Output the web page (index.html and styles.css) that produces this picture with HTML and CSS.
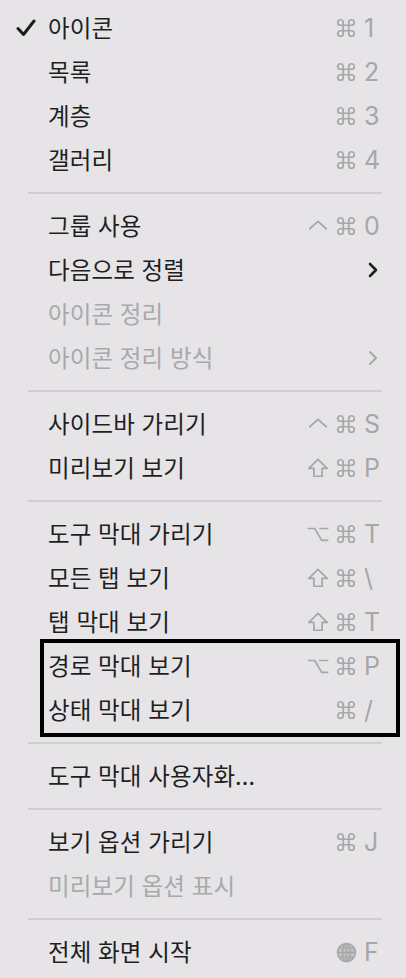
FILE: index.html
```html
<!DOCTYPE html>
<html lang="ko">
<head>
<meta charset="utf-8">
<link rel="stylesheet" href="styles.css">
<title>보기 메뉴</title>
</head>
<body>
<svg width="0" height="0" class="defs">
  <defs>
    <symbol id="cmd" viewBox="0 0 24 24"><path d="M15 6v12a3 3 0 1 0 3-3H6a3 3 0 1 0 3 3V6a3 3 0 1 0-3 3h12a3 3 0 1 0-3-3"/></symbol>
    <symbol id="ctrl" viewBox="0 0 24 24"><path d="M3 15l9-8 9 8"/></symbol>
    <symbol id="shift" viewBox="0 0 24 24"><path d="M12 2.5L2 12.5h5.5v8.5h9v-8.5H22z"/></symbol>
    <symbol id="opt" viewBox="0 0 24 24"><path d="M1.5 6h7l7.5 13h6.5M14 6h8.5"/></symbol>
    <symbol id="chev" viewBox="0 0 12 16"><path d="M3 2l6 6-6 6"/></symbol>
  </defs>
</svg>
<div class="menu">
  <div class="row">
    <span class="check"><svg viewBox="0 0 20 18"><path d="M2 9.5l5.5 6L18 2"/></svg></span>
    <span class="label">아이콘</span>
    <span class="sc"><span class="mods"><svg class="k"><use href="#cmd"/></svg></span><span class="key">1</span></span>
  </div>
  <div class="row">
    <span class="check"></span><span class="label">목록</span>
    <span class="sc"><span class="mods"><svg class="k"><use href="#cmd"/></svg></span><span class="key">2</span></span>
  </div>
  <div class="row">
    <span class="check"></span><span class="label">계층</span>
    <span class="sc"><span class="mods"><svg class="k"><use href="#cmd"/></svg></span><span class="key">3</span></span>
  </div>
  <div class="row">
    <span class="check"></span><span class="label">갤러리</span>
    <span class="sc"><span class="mods"><svg class="k"><use href="#cmd"/></svg></span><span class="key">4</span></span>
  </div>
  <div class="sep"></div>
  <div class="row">
    <span class="check"></span><span class="label">그룹 사용</span>
    <span class="sc"><span class="mods"><svg class="k"><use href="#ctrl"/></svg><svg class="k"><use href="#cmd"/></svg></span><span class="key">0</span></span>
  </div>
  <div class="row">
    <span class="check"></span><span class="label">다음으로 정렬</span>
    <span class="sc"><svg class="chev"><use href="#chev"/></svg></span>
  </div>
  <div class="row disabled">
    <span class="check"></span><span class="label">아이콘 정리</span>
  </div>
  <div class="row disabled">
    <span class="check"></span><span class="label">아이콘 정리 방식</span>
    <span class="sc"><svg class="chev"><use href="#chev"/></svg></span>
  </div>
  <div class="sep"></div>
  <div class="row">
    <span class="check"></span><span class="label">사이드바 가리기</span>
    <span class="sc"><span class="mods"><svg class="k"><use href="#ctrl"/></svg><svg class="k"><use href="#cmd"/></svg></span><span class="key">S</span></span>
  </div>
  <div class="row">
    <span class="check"></span><span class="label">미리보기 보기</span>
    <span class="sc"><span class="mods"><svg class="k"><use href="#shift"/></svg><svg class="k"><use href="#cmd"/></svg></span><span class="key">P</span></span>
  </div>
  <div class="sep"></div>
  <div class="row">
    <span class="check"></span><span class="label">도구 막대 가리기</span>
    <span class="sc"><span class="mods"><svg class="k"><use href="#opt"/></svg><svg class="k"><use href="#cmd"/></svg></span><span class="key">T</span></span>
  </div>
  <div class="row">
    <span class="check"></span><span class="label">모든 탭 보기</span>
    <span class="sc"><span class="mods"><svg class="k"><use href="#shift"/></svg><svg class="k"><use href="#cmd"/></svg></span><span class="key">\</span></span>
  </div>
  <div class="row">
    <span class="check"></span><span class="label">탭 막대 보기</span>
    <span class="sc"><span class="mods"><svg class="k"><use href="#shift"/></svg><svg class="k"><use href="#cmd"/></svg></span><span class="key">T</span></span>
  </div>
  <div class="highlight">
    <div class="row">
      <span class="check"></span><span class="label">경로 막대 보기</span>
      <span class="sc"><span class="mods"><svg class="k"><use href="#opt"/></svg><svg class="k"><use href="#cmd"/></svg></span><span class="key">P</span></span>
    </div>
    <div class="row">
      <span class="check"></span><span class="label">상태 막대 보기</span>
      <span class="sc"><span class="mods"><svg class="k"><use href="#cmd"/></svg></span><span class="key">/</span></span>
    </div>
  </div>
  <div class="sep"></div>
  <div class="row">
    <span class="check"></span><span class="label">도구 막대 사용자화...</span>
  </div>
  <div class="sep"></div>
  <div class="row">
    <span class="check"></span><span class="label">보기 옵션 가리기</span>
    <span class="sc"><span class="mods"><svg class="k"><use href="#cmd"/></svg></span><span class="key">J</span></span>
  </div>
  <div class="row disabled">
    <span class="check"></span><span class="label">미리보기 옵션 표시</span>
  </div>
  <div class="sep"></div>
  <div class="row">
    <span class="check"></span><span class="label">전체 화면 시작</span>
    <span class="sc"><span class="mods"><svg class="globe" viewBox="0 0 20 20"><circle cx="10" cy="10" r="8.6"/><ellipse cx="10" cy="10" rx="3.8" ry="8.6"/><path d="M10 1.4v17.2M1.4 10h17.2M2.8 5.6h14.4M2.8 14.4h14.4"/></svg></span><span class="key">F</span></span>
  </div>
</div>
</body>
</html>
```
FILE: styles.css
```css
html, body {
  margin: 0;
  padding: 0;
  background: #e6e4e7;
}
.defs {
  position: absolute;
  width: 0;
  height: 0;
}
.menu {
  width: 406px;
  height: 978px;
  box-sizing: border-box;
  padding-top: 6px;
  font-family: "Noto Sans CJK KR", "Noto Sans", sans-serif;
  color: #1f1f1f;
}
.row {
  display: flex;
  align-items: center;
  height: 44px;
  padding-left: 16px;
  padding-right: 25px;
  font-size: 23.5px;
}
.label {
  flex: 1;
  white-space: nowrap;
  letter-spacing: 0.1px;
  position: relative;
  top: -1px;
}
.check {
  width: 32px;
  flex: none;
  display: flex;
  align-items: center;
}
.check svg {
  width: 20px;
  height: 18px;
  fill: none;
  stroke: #1e1e1e;
  stroke-width: 3;
  stroke-linecap: round;
  stroke-linejoin: round;
}
.disabled .label {
  color: #a9a8aa;
}
.sc {
  display: flex;
  align-items: center;
  color: #a7a6a8;
  font-family: Inter, "Liberation Sans", sans-serif;
  font-size: 25px;
}
.mods {
  display: flex;
  align-items: center;
  gap: 6px;
}
.k {
  width: 22px;
  height: 22px;
  fill: none;
  stroke: #a7a6a8;
  stroke-width: 1.9;
  stroke-linecap: round;
  stroke-linejoin: round;
}
.globe {
  width: 21px;
  height: 21px;
  fill: #c4c2c5;
  stroke: #a7a6a8;
  stroke-width: 1.4;
}
.key {
  width: 17px;
  margin-left: 7px;
  text-align: left;
  line-height: 1;
}
.chev {
  width: 12px;
  height: 16px;
  margin-right: 2px;
  fill: none;
  stroke: #1e1e1e;
  stroke-width: 2.6;
  stroke-linecap: round;
  stroke-linejoin: round;
}
.disabled .chev {
  stroke: #a9a8aa;
  stroke-width: 2;
}
.sep {
  height: 22px;
  display: flex;
  align-items: center;
  padding: 0 24px 0 28px;
}
.sep::before {
  content: "";
  flex: 1;
  height: 2px;
  background: #cfcdd0;
}
.highlight {
  margin: -5px 6px -5px 40px;
  border: 4px solid #000;
  padding: 1px 0;
}
.highlight .row {
  padding-left: 4px;
  padding-right: 15px;
}
.highlight .check {
  display: none;
}
```
